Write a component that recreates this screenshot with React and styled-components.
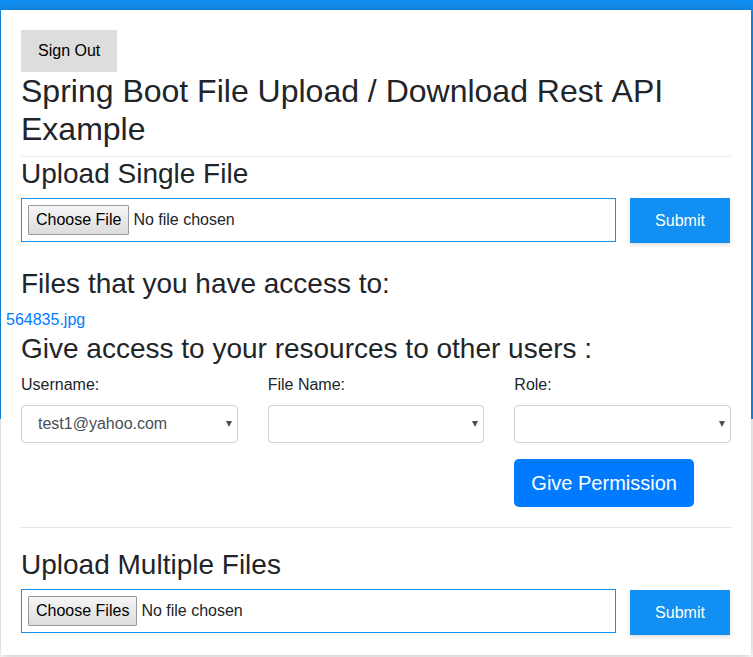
import React from "react";
import styled, { createGlobalStyle } from "styled-components";

const GlobalStyle = createGlobalStyle`
  *, *::before, *::after { box-sizing: border-box; }
  body {
    margin: 0;
    background: linear-gradient(#128ff2, #128ff2) 0 0 / 100% 419px no-repeat #fff;
    color: #212529;
    font: 400 16px/24px "Liberation Sans", Arial, sans-serif;
  }
  button, input, select { font: inherit; }
`;

const Card = styled.main`
  margin: 10px 2px 2px 1px;
  padding: 20px;
  background: #fff;
  box-shadow: 0 1px 11px rgba(0, 0, 0, 0.27);
`;

const SignOutButton = styled.button`
  display: block;
  height: 42px;
  padding: 0 17px;
  border: 0;
  background: #ddd;
  color: #000;
`;

const Title = styled.h1`
  margin: 0;
  padding-bottom: 8px;
  border-bottom: 1px solid #ececec;
  font-size: 32px;
  font-weight: 500;
  font-kerning: none;
  line-height: 38px;
`;

const Heading = styled.h3`
  margin: 0 0 7px;
  font-size: 28px;
  font-weight: 500;
  line-height: 34px;
`;

const UploadForm = styled.form`
  display: grid;
  grid-template-columns: minmax(0, 1fr) 100px;
  align-items: start;
  gap: 14px;
  min-height: ${(p) => (p.$tall ? "46px" : "45px")};
  padding-right: 1px;
`;

const FileInput = styled.input`
  width: 100%;
  height: 44px;
  padding: 6px;
  border: 1px solid #128ff2;
  color: #212529;

  &::file-selector-button {
    height: 30px;
    margin: 0 4px 0 0;
    padding: 0 7px;
    border: 1px solid #999;
    border-radius: 1px;
    background: linear-gradient(#f6f6f6, #dcdcdc);
    color: #000;
    font: inherit;
  }
`;

const SubmitButton = styled.button`
  align-self: end;
  height: 45px;
  padding: 0 16px;
  border: 0;
  background: #128ff2;
  color: #fff;
  box-shadow: 0 2px 4px rgba(0, 0, 0, 0.15);
`;

const FilesSection = styled.section`
  margin-top: 24px;
`;

const FileList = styled.div`
  margin: 0 -15px;
`;

const FileLink = styled.a`
  color: #007bff;
  text-decoration: none;
`;

const PermissionForm = styled.form`
  display: grid;
  grid-template-columns: repeat(3, minmax(0, 1fr));
  gap: 16px 30px;
  padding-bottom: 20px;
  border-bottom: 1px solid #e5e5e5;
`;

const Field = styled.div`
  display: flex;
  flex-direction: column;
  gap: 8px;
`;

const SelectBox = styled.div`
  position: relative;
  color: #495057;
`;

const Select = styled.select`
  display: block;
  width: 100%;
  height: 38px;
  padding: 0 24px 0 16px;
  border: 1px solid #ced4da;
  border-radius: 4px;
  background: #fff;
  color: inherit;
  appearance: none;
`;

const Arrow = styled.svg`
  position: absolute;
  top: 16px;
  right: 6px;
  pointer-events: none;
`;

const PermissionButton = styled.button`
  grid-column: 3;
  justify-self: start;
  height: 48px;
  padding: 0 17px;
  border: 0;
  border-radius: 5px;
  background: #007bff;
  color: #fff;
  font-size: 20px;
  white-space: nowrap;
`;

const MultipleSection = styled.section`
  margin-top: 20px;
`;

const stopSubmit = (event) => event.preventDefault();

function SelectField({ id, label, options }) {
  return (
    <Field>
      <label htmlFor={id}>{label}</label>
      <SelectBox>
        <Select id={id}>
          {options.map((option) => (
            <option key={option}>{option}</option>
          ))}
        </Select>
        <Arrow width="6" height="6" viewBox="0 0 6 6" aria-hidden="true">
          <path d="M0 0h6L3 6z" fill="currentColor" />
        </Arrow>
      </SelectBox>
    </Field>
  );
}

function Upload({ label, multiple = false }) {
  return (
    <UploadForm $tall={multiple} onSubmit={stopSubmit}>
      <FileInput type="file" aria-label={label} multiple={multiple} />
      <SubmitButton type="submit">Submit</SubmitButton>
    </UploadForm>
  );
}

export default function App() {
  return (
    <>
      <GlobalStyle />
      <Card>
        <SignOutButton type="button">Sign Out</SignOutButton>
        <Title>Spring Boot File Upload / Download Rest API Example</Title>
        <section>
          <Heading>Upload Single File</Heading>
          <Upload label="Upload Single File" />
        </section>
        <FilesSection>
          <Heading>Files that you have access to:</Heading>
          <FileList>
            <FileLink href="#564835.jpg">564835.jpg</FileLink>
          </FileList>
        </FilesSection>
        <section>
          <Heading>Give access to your resources to other users :</Heading>
          <PermissionForm onSubmit={stopSubmit}>
            <SelectField id="username" label="Username:" options={["test1@yahoo.com"]} />
            <SelectField id="filename" label="File Name:" options={[""]} />
            <SelectField id="role" label="Role:" options={[""]} />
            <PermissionButton type="submit">Give Permission</PermissionButton>
          </PermissionForm>
        </section>
        <MultipleSection>
          <Heading>Upload Multiple Files</Heading>
          <Upload label="Upload Multiple Files" multiple />
        </MultipleSection>
      </Card>
    </>
  );
}
